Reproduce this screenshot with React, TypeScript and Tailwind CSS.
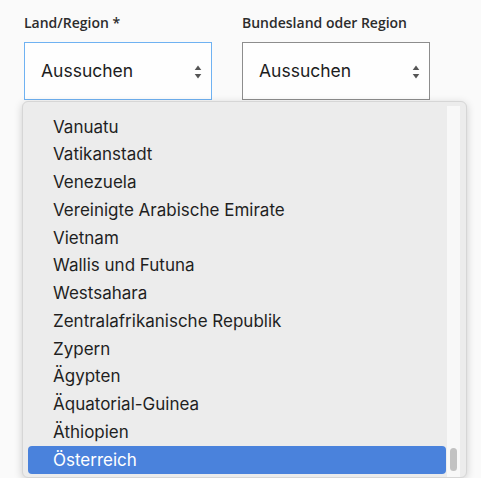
const COUNTRIES = [
  'Vanuatu',
  'Vatikanstadt',
  'Venezuela',
  'Vereinigte Arabische Emirate',
  'Vietnam',
  'Wallis und Futuna',
  'Westsahara',
  'Zentralafrikanische Republik',
  'Zypern',
  'Ägypten',
  'Äquatorial-Guinea',
  'Äthiopien',
  'Österreich',
]

function Arrows() {
  return (
    <svg width="8" height="14" viewBox="0 0 8 14" className="text-[#555]">
      <path d="M4 0.5 L7.3 5 H0.7 Z" fill="currentColor" />
      <path d="M4 13.5 L7.3 9 H0.7 Z" fill="currentColor" />
    </svg>
  )
}

function Select({ label, focused }: { label: string; focused?: boolean }) {
  return (
    <div className="flex w-[188px] flex-col">
      <div className="h-[42px] pt-[13px] text-[14px] font-semibold leading-[20px] text-[#2c2c2c] [font-family:'Open_Sans',sans-serif]">
        {label}
      </div>
      <div
        className={`flex h-[58px] items-center justify-between border bg-[#fefefe] pl-[16px] pr-[9px] pt-[1px] text-[17.5px] text-[#1d1d1d] ${
          focused ? 'border-[#6fb2f2]' : 'border-[#8d8d8d]'
        }`}
      >
        <span>Aussuchen</span>
        <Arrows />
      </div>
    </div>
  )
}

export default function App() {
  return (
    <div className="relative h-[478px] w-[481px] overflow-hidden bg-[#fafafa] [font-family:Inter,'Liberation_Sans',sans-serif]">
      <div className="flex gap-[30px] pl-[24px]">
        <Select label="Land/Region *" focused />
        <Select label="Bundesland oder Region" />
      </div>

      {/* open native-style dropdown */}
      <div className="absolute left-[22px] top-[101px] flex h-[377px] w-[445px] rounded-[6px] border border-[#d6d6d6] bg-[#ececec] shadow-[0_2px_8px_rgba(0,0,0,0.18)]">
        <ul className="flex-1 pl-[5px] pt-[11px]">
          {COUNTRIES.map((c, i) => {
            const sel = i === COUNTRIES.length - 1
            return (
              <li
                key={c}
                className={`flex h-[27.75px] items-center rounded-[4px] pl-[25px] pt-[1px] text-[17px] ${
                  sel ? 'bg-[#4a82dc] text-white' : 'text-[#1f1f1f]'
                }`}
              >
                {c}
              </li>
            )
          })}
        </ul>
        <div className="mt-[4px] mr-[6px] ml-[1px] flex w-[13px] flex-col justify-end bg-[#f8f8f8] pb-[6px]">
          <div className="mx-auto h-[23px] w-[7px] rounded-full bg-[#c2c2c2]" />
        </div>
      </div>
    </div>
  )
}
